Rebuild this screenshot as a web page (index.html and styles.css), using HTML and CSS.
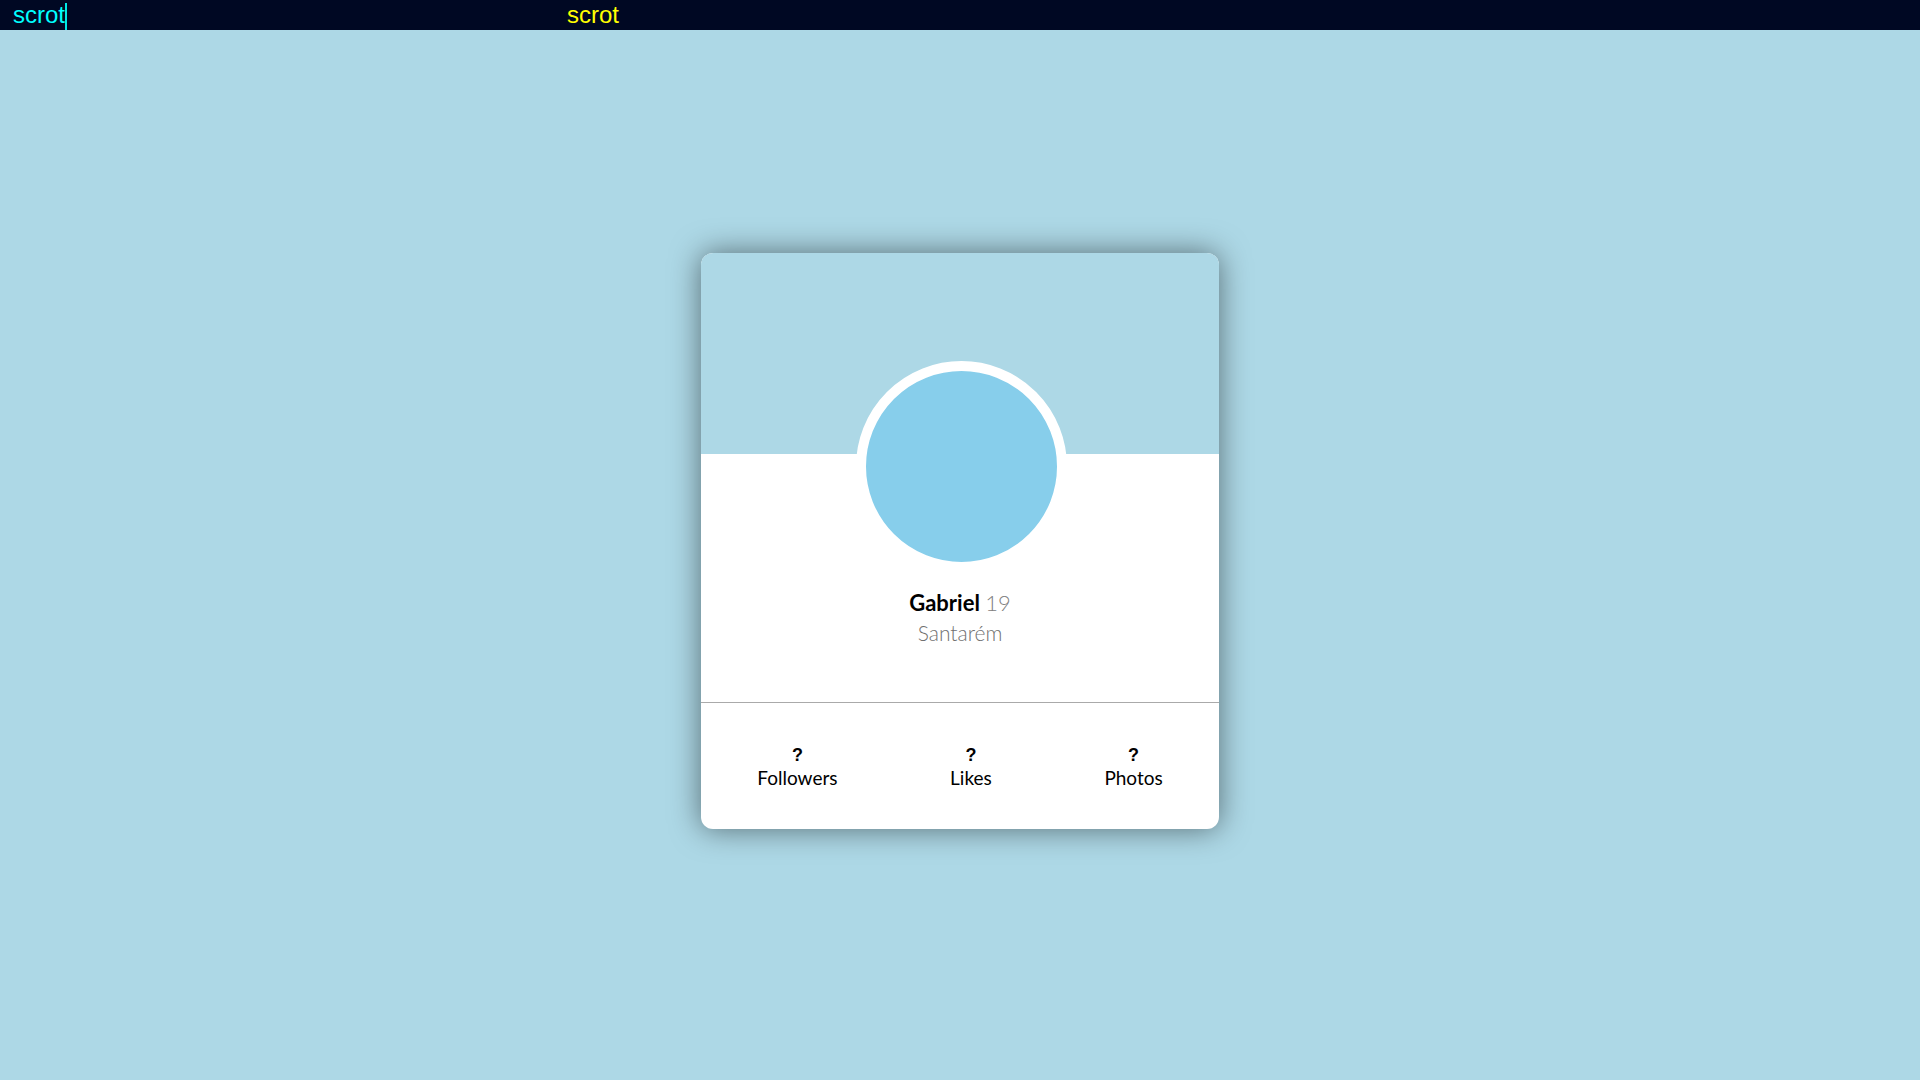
FILE: index.html
```html
<!DOCTYPE html>
<html lang="pt">
<head>
<meta charset="utf-8">
<title>Profile card</title>
<link rel="stylesheet" href="styles.css">
</head>
<body>
<div class="topbar">
  <span class="cmd">scrot</span><span class="caret"></span>
  <span class="title">scrot</span>
</div>
<main class="page">
  <section class="card">
    <div class="card-header"></div>
    <div class="card-info">
      <div class="avatar"></div>
      <h1 class="name">Gabriel <span class="age">19</span></h1>
      <p class="city">Santarém</p>
    </div>
    <div class="stats">
      <div class="stat"><span class="stat-value">?</span><span class="stat-label">Followers</span></div>
      <div class="stat"><span class="stat-value">?</span><span class="stat-label">Likes</span></div>
      <div class="stat"><span class="stat-value">?</span><span class="stat-label">Photos</span></div>
    </div>
  </section>
</main>
</body>
</html>
```
FILE: styles.css
```css
* { box-sizing: content-box; }
html, body { margin: 0; padding: 0; }
body {
  background: #add8e6;
  font-family: "Lato", "Inter", sans-serif;
  height: 1080px;
  overflow: hidden;
}
.topbar {
  position: absolute;
  top: 0; left: 0; right: 0;
  height: 30px;
  background: #000823;
  font-family: "Liberation Sans", Arial, sans-serif;
  font-size: 24px;
  line-height: 29px;
  z-index: 2;
}
.cmd {
  position: absolute;
  left: 13px;
  top: 0;
  color: #00ffff;
}
.caret {
  position: absolute;
  left: 65px;
  top: 3px;
  width: 2px;
  height: 27px;
  background: #00e8e8;
}
.title {
  position: absolute;
  left: 567px;
  top: 0;
  color: #ffff00;
}
.page {
  height: 1080px;
  display: flex;
  align-items: center;
  justify-content: center;
}
.card {
  width: 518px;
  height: 576px;
  margin-top: 2px;
  background: #fff;
  border-radius: 12px;
  overflow: hidden;
  box-shadow: 0 0 30px rgba(0, 0, 0, 0.5);
  display: flex;
  flex-direction: column;
}
.card-header {
  height: 201px;
  background: #add8e6;
  flex: none;
}
.card-info {
  display: flex;
  flex-direction: column;
  align-items: center;
  height: 248px;
  border-bottom: 1px solid #aaaaaa;
}
.avatar {
  width: 191px;
  height: 191px;
  border: 10px solid #fff;
  border-radius: 50%;
  background: #87ceeb;
  margin: -93px 0 0 3px;
  flex: none;
}
.name {
  margin: 18px 0 0;
  font-size: 22px;
  line-height: 26px;
  font-weight: 700;
  color: #000;
}
.age {
  font-weight: 300;
  color: #808080;
}
.city {
  margin: 4px 0 0;
  font-size: 21px;
  line-height: 25px;
  font-weight: 300;
  color: #707070;
}
.stats {
  flex: 1;
  display: flex;
  justify-content: space-around;
  align-items: flex-start;
  padding-top: 41px;
}
.stat {
  display: flex;
  flex-direction: column;
  align-items: center;
}
.stat-value {
  font-family: "Liberation Sans", Arial, sans-serif;
  font-weight: 700;
  font-size: 18px;
  line-height: 22px;
  color: #000;
}
.stat-label {
  font-size: 19px;
  line-height: 24px;
  color: #000;
}
```
